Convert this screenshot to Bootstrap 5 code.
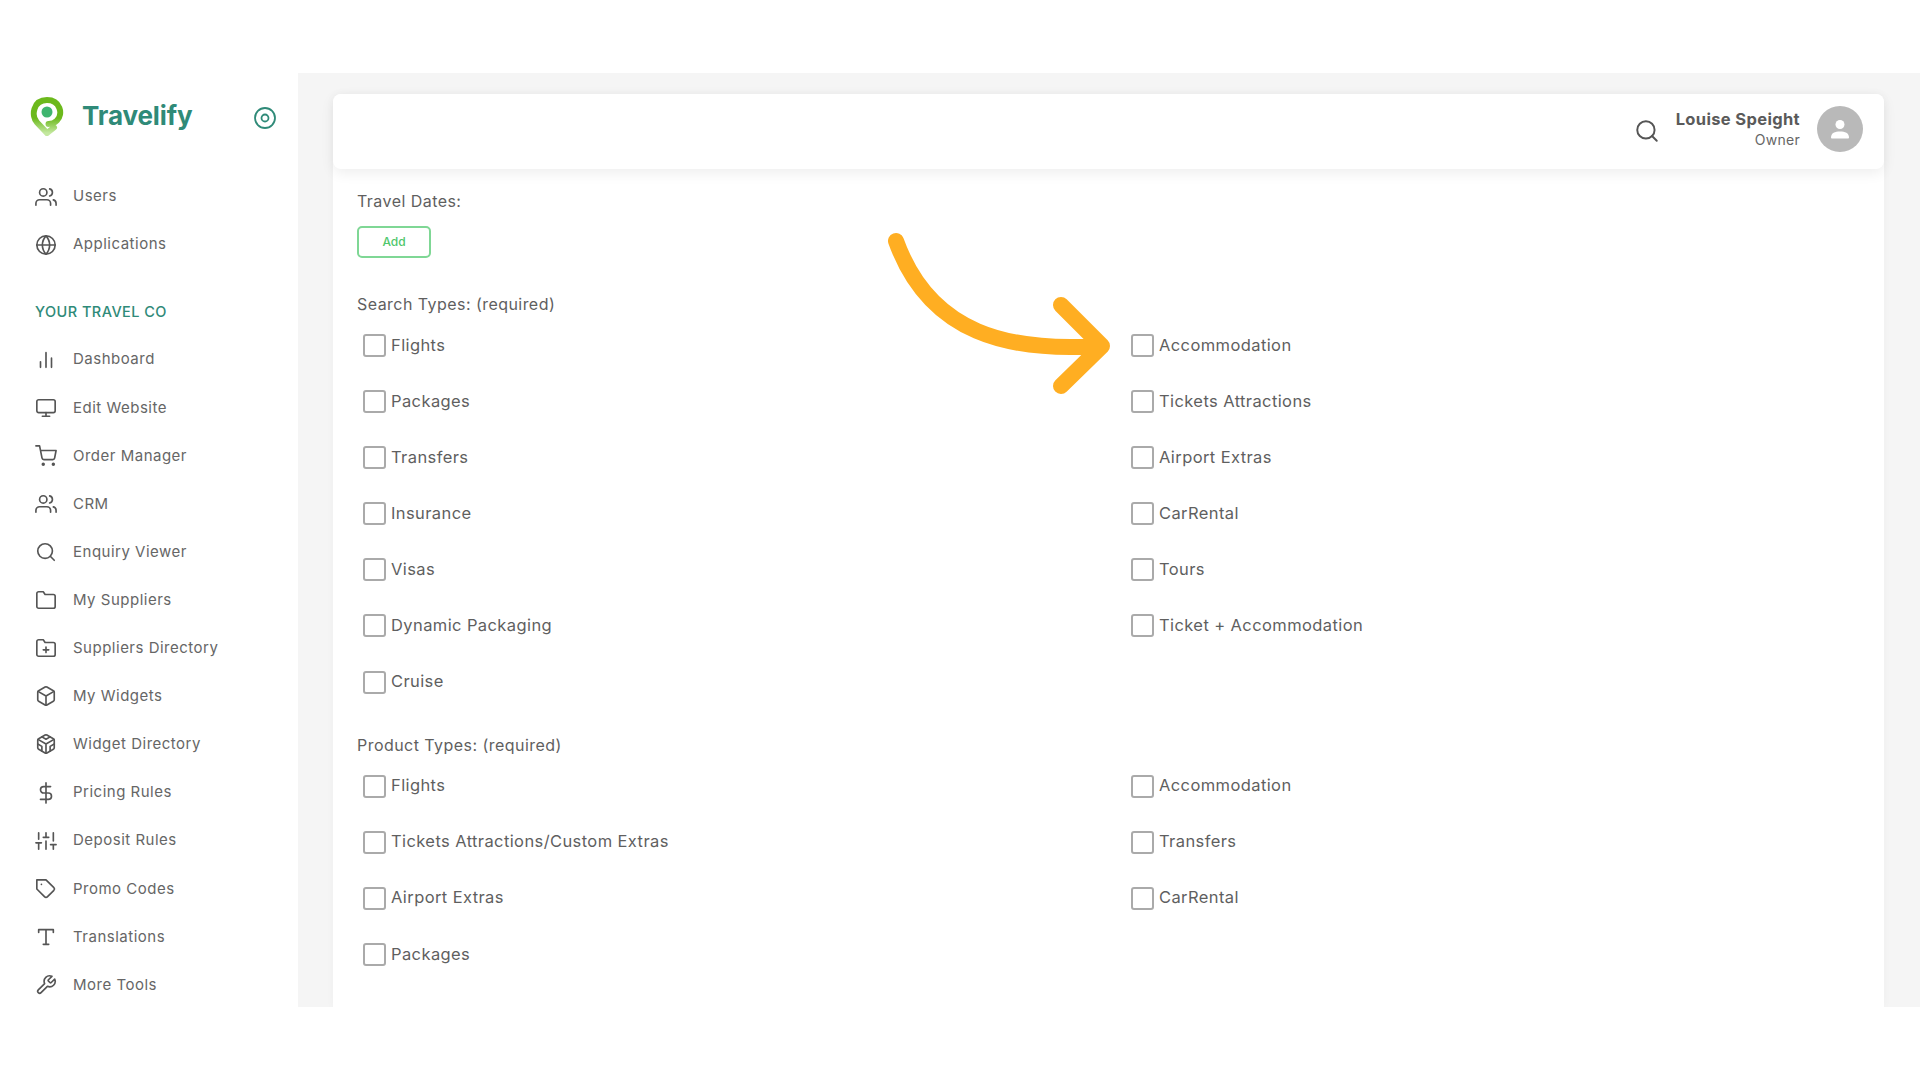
<!doctype html>
<html lang="en">
<head>
<meta charset="utf-8">
<title>Travelify</title>
<link href="https://cdn.jsdelivr.net/npm/bootstrap@5.3.0/dist/css/bootstrap.min.css" rel="stylesheet">
<style>
html,body{height:1080px;overflow:hidden;background:#fff}
body{font-family:Inter,"Open Sans","Liberation Sans",sans-serif;color:#5c5c5c;padding-top:73px}
.app-frame{height:934px;position:relative;overflow:hidden}
.side-col{width:298px;flex:none;background:#fff}
.brand-row{height:88px;padding:23px 0 0 30px}
.brand-name{font-size:26px;font-weight:700;color:#2f8a78;margin-left:18px;line-height:40px;letter-spacing:-.1px}
.target-ico{margin-left:60px;margin-top:10px}
.side-link{height:48.1px;padding-left:35px;color:#666;font-size:15px;letter-spacing:.5px;text-decoration:none}
.side-link svg,.search-ico{fill:none;stroke:#555;stroke-width:1.8;stroke-linecap:round;stroke-linejoin:round}
.side-link svg{width:22px;height:22px;margin-right:16px;flex:none}
.side-group{margin-top:11.5px}
.side-title{color:#2f8a78;font-size:14.5px;font-weight:500;padding-left:35px;height:30px;margin:28px 0 9px;line-height:30px;letter-spacing:.45px}
.main-col{background:#f5f5f5;padding:21px 36px 0 35px;min-width:0}
.work-panel{background:#fff;height:913px;border-radius:8px 8px 0 0;box-shadow:0 0 10px rgba(0,0,0,.03)}
.top-strip{height:75px;border-radius:8px;background:#fff;box-shadow:0 4px 14px rgba(0,0,0,.07);padding:0 21px 5px 0}
.search-ico{width:26px;height:26px;margin-right:16px;margin-top:4px}
.person-name{font-size:16.5px;font-weight:700;color:#5a5a5a;line-height:22px;letter-spacing:.35px}
.person-role{font-size:14px;color:#666;line-height:20px;letter-spacing:.3px}
.avatar-disc{width:46px;height:46px;border-radius:50%;background:#b9b9b9;margin-left:17px}
.form-area{padding:20px 24px 0}
.field-title{font-size:16px;line-height:24px;letter-spacing:.45px;color:#5f5f5f;margin:0}
.add-btn{width:74px;height:32px;padding:0;font-size:12px;font-weight:500;color:#4fc76c;border:2px solid #7fd795;border-radius:5px;background:#fff;margin:13px 0 34px;display:block}
.check-grid{--bs-gutter-x:0;width:1536px}
.check-cell{width:768px;flex:none;padding-left:6px;height:56.1px}
.check-line{display:flex;align-items:center;gap:5px;margin:0;font-size:16.5px;letter-spacing:.4px;color:#5f5f5f;height:24px}
.check-line .form-check-input{width:23px;height:23px;margin:1px 0 0;border:2px solid #aaa;border-radius:3px;flex:none}
.search-set{margin-top:17px}
.product-title{margin-top:7px}
.pointer-arrow{position:absolute;left:0;top:0;width:1920px;height:933px;pointer-events:none;fill:none;stroke:#ffae22;stroke-width:16;stroke-linecap:round;stroke-linejoin:round}
</style>
</head>
<body>
<svg width="0" height="0" class="position-absolute">
<defs>
<symbol id="i-users" viewBox="0 0 24 24"><path d="M17 21v-2a4 4 0 0 0-4-4H5a4 4 0 0 0-4 4v2"/><circle cx="9" cy="7" r="4"/><path d="M23 21v-2a4 4 0 0 0-3-3.87"/><path d="M16 3.13a4 4 0 0 1 0 7.75"/></symbol>
<symbol id="i-globe" viewBox="0 0 24 24"><circle cx="12" cy="12" r="10"/><path d="M2 12h20"/><path d="M12 2a15.3 15.3 0 0 1 4 10 15.3 15.3 0 0 1-4 10 15.3 15.3 0 0 1-4-10 15.3 15.3 0 0 1 4-10z"/></symbol>
<symbol id="i-bars" viewBox="0 0 24 24"><path d="M18 20V10M12 20V4M6 20v-6"/></symbol>
<symbol id="i-monitor" viewBox="0 0 24 24"><rect x="2" y="3" width="20" height="14" rx="2"/><path d="M8 21h8M12 17v4"/></symbol>
<symbol id="i-cart" viewBox="0 0 24 24"><circle cx="9" cy="21" r="1"/><circle cx="20" cy="21" r="1"/><path d="M1 1h4l2.68 13.39a2 2 0 0 0 2 1.61h9.72a2 2 0 0 0 2-1.61L23 6H6"/></symbol>
<symbol id="i-search" viewBox="0 0 24 24"><circle cx="11" cy="11" r="8"/><path d="M21 21l-4.35-4.35"/></symbol>
<symbol id="i-folder" viewBox="0 0 24 24"><path d="M22 19a2 2 0 0 1-2 2H4a2 2 0 0 1-2-2V5a2 2 0 0 1 2-2h5l2 3h9a2 2 0 0 1 2 2z"/></symbol>
<symbol id="i-folder-plus" viewBox="0 0 24 24"><path d="M22 19a2 2 0 0 1-2 2H4a2 2 0 0 1-2-2V5a2 2 0 0 1 2-2h5l2 3h9a2 2 0 0 1 2 2z"/><path d="M12 11v6M9 14h6"/></symbol>
<symbol id="i-box" viewBox="0 0 24 24"><path d="M21 16V8a2 2 0 0 0-1-1.73l-7-4a2 2 0 0 0-2 0l-7 4A2 2 0 0 0 3 8v8a2 2 0 0 0 1 1.73l7 4a2 2 0 0 0 2 0l7-4A2 2 0 0 0 21 16z"/><path d="M3.27 6.96L12 12.01l8.73-5.05M12 22.08V12"/></symbol>
<symbol id="i-sandbox" viewBox="0 0 24 24"><path d="M21 16V8a2 2 0 0 0-1-1.73l-7-4a2 2 0 0 0-2 0l-7 4A2 2 0 0 0 3 8v8a2 2 0 0 0 1 1.73l7 4a2 2 0 0 0 2 0l7-4A2 2 0 0 0 21 16z"/><path d="M7.5 4.21l4.5 2.6 4.5-2.6M7.5 19.79V14.6L3 12M21 12l-4.5 2.6v5.19M3.27 6.96L12 12.01l8.73-5.05M12 22.08V12"/></symbol>
<symbol id="i-dollar" viewBox="0 0 24 24"><path d="M12 1v22M17 5H9.5a3.5 3.5 0 0 0 0 7h5a3.5 3.5 0 0 1 0 7H6"/></symbol>
<symbol id="i-sliders" viewBox="0 0 24 24"><path d="M4 21v-7M4 10V3M12 21v-9M12 8V3M20 21v-5M20 12V3M1 14h6M9 8h6M17 16h6"/></symbol>
<symbol id="i-tag" viewBox="0 0 24 24"><path d="M20.59 13.41l-7.17 7.17a2 2 0 0 1-2.83 0L2 12V2h10l8.59 8.59a2 2 0 0 1 0 2.82z"/><path d="M7 7h.01"/></symbol>
<symbol id="i-type" viewBox="0 0 24 24"><path d="M4 7V4h16v3M9 20h6M12 4v16"/></symbol>
<symbol id="i-tool" viewBox="0 0 24 24"><path d="M14.7 6.3a1 1 0 0 0 0 1.4l1.6 1.6a1 1 0 0 0 1.4 0l3.77-3.77a6 6 0 0 1-7.94 7.94l-6.91 6.91a2.12 2.12 0 0 1-3-3l6.91-6.91a6 6 0 0 1 7.94-7.94l-3.76 3.76z"/></symbol>
<linearGradient id="pin-grad" x1="0" y1="0" x2="0" y2="1"><stop offset=".55" stop-color="#6cb91c"/><stop offset="1" stop-color="#c4e8a0"/></linearGradient>
</defs>
</svg>
<div class="app-frame d-flex">
  <aside class="side-col">
    <div class="brand-row d-flex align-items-start">
      <svg width="34" height="40" viewBox="0 0 34 40"><path d="M24 31.500L17 37 7 26.500C1 20 3 4 17 4c13 0 16.500 14 10 20.500-2.500 2.500-6 3.500-8.500 3.500" fill="none" stroke="url(#pin-grad)" stroke-width="6" stroke-linecap="round"/><circle cx="17" cy="16" r="5.500" fill="#3fb56f"/></svg>
      <span class="brand-name">Travelify</span>
      <svg class="target-ico" width="24" height="24" viewBox="0 0 24 24" fill="none" stroke="#2f8a78"><circle cx="12" cy="12" r="10" stroke-width="1.800"/><circle cx="12" cy="12" r="3.500" stroke-width="1.800"/></svg>
    </div>
    <nav class="d-flex flex-column side-group">
      <a class="side-link d-flex align-items-center" href="#"><svg><use href="#i-users"/></svg>Users</a>
      <a class="side-link d-flex align-items-center" href="#"><svg><use href="#i-globe"/></svg>Applications</a>
      <div class="side-title">YOUR TRAVEL CO</div>
      <a class="side-link d-flex align-items-center" href="#"><svg><use href="#i-bars"/></svg>Dashboard</a>
      <a class="side-link d-flex align-items-center" href="#"><svg><use href="#i-monitor"/></svg>Edit Website</a>
      <a class="side-link d-flex align-items-center" href="#"><svg><use href="#i-cart"/></svg>Order Manager</a>
      <a class="side-link d-flex align-items-center" href="#"><svg><use href="#i-users"/></svg>CRM</a>
      <a class="side-link d-flex align-items-center" href="#"><svg><use href="#i-search"/></svg>Enquiry Viewer</a>
      <a class="side-link d-flex align-items-center" href="#"><svg><use href="#i-folder"/></svg>My Suppliers</a>
      <a class="side-link d-flex align-items-center" href="#"><svg><use href="#i-folder-plus"/></svg>Suppliers Directory</a>
      <a class="side-link d-flex align-items-center" href="#"><svg><use href="#i-box"/></svg>My Widgets</a>
      <a class="side-link d-flex align-items-center" href="#"><svg><use href="#i-sandbox"/></svg>Widget Directory</a>
      <a class="side-link d-flex align-items-center" href="#"><svg><use href="#i-dollar"/></svg>Pricing Rules</a>
      <a class="side-link d-flex align-items-center" href="#"><svg><use href="#i-sliders"/></svg>Deposit Rules</a>
      <a class="side-link d-flex align-items-center" href="#"><svg><use href="#i-tag"/></svg>Promo Codes</a>
      <a class="side-link d-flex align-items-center" href="#"><svg><use href="#i-type"/></svg>Translations</a>
      <a class="side-link d-flex align-items-center" href="#"><svg><use href="#i-tool"/></svg>More Tools</a>
    </nav>
  </aside>
  <main class="main-col flex-grow-1">
    <div class="work-panel">
      <header class="top-strip d-flex align-items-center justify-content-end">
        <svg class="search-ico"><use href="#i-search"/></svg>
        <div class="text-end">
          <div class="person-name">Louise Speight</div>
          <div class="person-role">Owner</div>
        </div>
        <div class="avatar-disc d-flex align-items-center justify-content-center">
          <svg width="24" height="24" viewBox="0 0 24 24" fill="#fff"><circle cx="12" cy="7.500" r="4.500"/><path d="M3 20.500c0-4.500 4-6 9-6s9 1.500 9 6c0 .5-.5 1-1 1H4c-.5 0-1-.5-1-1z"/></svg>
        </div>
      </header>
      <section class="form-area">
        <p class="field-title">Travel Dates:</p>
        <button type="button" class="btn add-btn">Add</button>
        <p class="field-title">Search Types: (required)</p>
        <div class="row check-grid search-set">
          <div class="check-cell"><label class="check-line"><input class="form-check-input" type="checkbox">Flights</label></div>
          <div class="check-cell"><label class="check-line"><input class="form-check-input" type="checkbox">Accommodation</label></div>
          <div class="check-cell"><label class="check-line"><input class="form-check-input" type="checkbox">Packages</label></div>
          <div class="check-cell"><label class="check-line"><input class="form-check-input" type="checkbox">Tickets Attractions</label></div>
          <div class="check-cell"><label class="check-line"><input class="form-check-input" type="checkbox">Transfers</label></div>
          <div class="check-cell"><label class="check-line"><input class="form-check-input" type="checkbox">Airport Extras</label></div>
          <div class="check-cell"><label class="check-line"><input class="form-check-input" type="checkbox">Insurance</label></div>
          <div class="check-cell"><label class="check-line"><input class="form-check-input" type="checkbox">CarRental</label></div>
          <div class="check-cell"><label class="check-line"><input class="form-check-input" type="checkbox">Visas</label></div>
          <div class="check-cell"><label class="check-line"><input class="form-check-input" type="checkbox">Tours</label></div>
          <div class="check-cell"><label class="check-line"><input class="form-check-input" type="checkbox">Dynamic Packaging</label></div>
          <div class="check-cell"><label class="check-line"><input class="form-check-input" type="checkbox">Ticket + Accommodation</label></div>
          <div class="check-cell"><label class="check-line"><input class="form-check-input" type="checkbox">Cruise</label></div>
          <div class="check-cell"></div>
        </div>
        <p class="field-title product-title">Product Types: (required)</p>
        <div class="row check-grid search-set">
          <div class="check-cell"><label class="check-line"><input class="form-check-input" type="checkbox">Flights</label></div>
          <div class="check-cell"><label class="check-line"><input class="form-check-input" type="checkbox">Accommodation</label></div>
          <div class="check-cell"><label class="check-line"><input class="form-check-input" type="checkbox">Tickets Attractions/Custom Extras</label></div>
          <div class="check-cell"><label class="check-line"><input class="form-check-input" type="checkbox">Transfers</label></div>
          <div class="check-cell"><label class="check-line"><input class="form-check-input" type="checkbox">Airport Extras</label></div>
          <div class="check-cell"><label class="check-line"><input class="form-check-input" type="checkbox">CarRental</label></div>
          <div class="check-cell"><label class="check-line"><input class="form-check-input" type="checkbox">Packages</label></div>
          <div class="check-cell"></div>
        </div>
      </section>
    </div>
  </main>
  <svg class="pointer-arrow" viewBox="0 0 1920 933"><path d="M896 168C930 262 1010 279 1100 273M1061 232l41 41-41 40"/></svg>
</div>
<script src="https://cdn.jsdelivr.net/npm/bootstrap@5.3.0/dist/js/bootstrap.bundle.min.js"></script>
</body>
</html>
